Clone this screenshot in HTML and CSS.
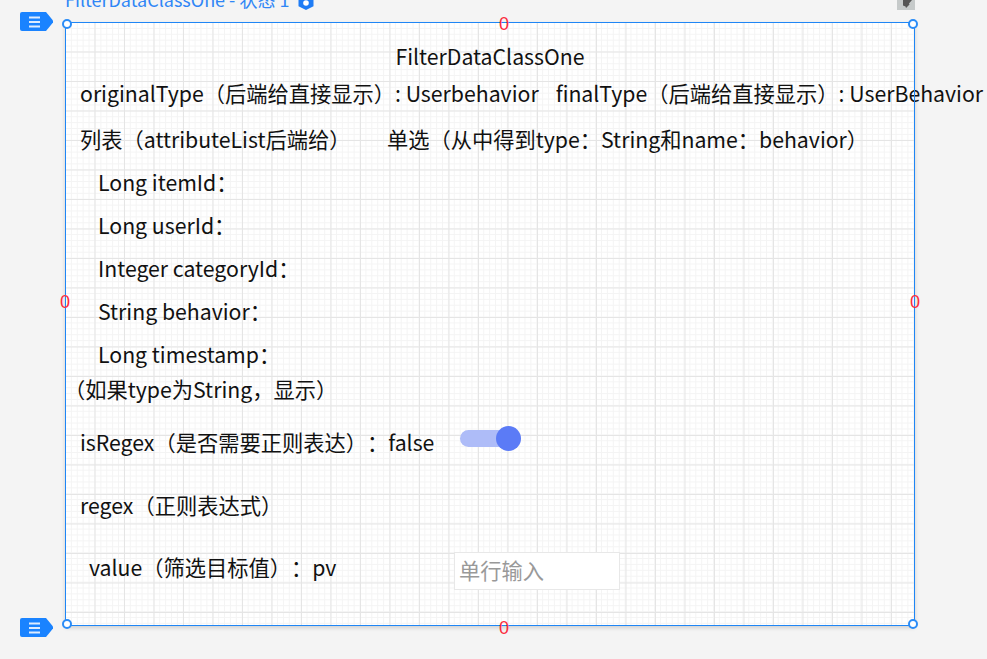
FILE: index.html
```html
<!DOCTYPE html>
<html lang="zh">
<head>
    <meta charset="UTF-8">
    <title>FilterDataClassOne</title>
    <link rel="stylesheet" href="styles.css">
</head>
<body>
<div class="stage">
    <div class="state-bar">
        <span class="state-name">FilterDataClassOne - 状态 1</span>
        <svg class="state-icon" width="16" height="16" viewBox="0 0 16 16">
            <path d="M8 0 15.500 3.800v8.400L8 16 .5 12.200V3.800z" fill="#1f7cf5"/>
            <circle cx="8" cy="9" r="2.800" fill="#fff"/>
        </svg>
        <span class="state-tool">
            <svg width="18" height="10" viewBox="0 0 18 10"><path d="M6 0h9l-3 3.500.5 1L9 8l-.5-1.500L6 5.500z" fill="#555"/></svg>
        </span>
    </div>

    <div class="tag tag-top">
        <svg width="33" height="19" viewBox="0 0 33 19">
            <path d="M2 0h24l7 8.500v2L26 19H2a2 2 0 0 1-2-2V2a2 2 0 0 1 2-2z" fill="#1a83ff"/>
            <path d="M9 5.500h11M9 10h11M9 14.500h11" stroke="#fff" stroke-width="1.800" opacity=".85"/>
        </svg>
    </div>
    <div class="tag tag-bottom">
        <svg width="33" height="19" viewBox="0 0 33 19">
            <path d="M2 0h24l7 8.500v2L26 19H2a2 2 0 0 1-2-2V2a2 2 0 0 1 2-2z" fill="#1a83ff"/>
            <path d="M9 5.500h11M9 10h11M9 14.500h11" stroke="#fff" stroke-width="1.800" opacity=".85"/>
        </svg>
    </div>

    <div class="panel">
        <div class="title">FilterDataClassOne</div>
        <div class="row types">
            <span>originalType（后端给直接显示）: Userbehavior</span>
            <span>finalType（后端给直接显示）: UserBehavior</span>
        </div>
        <div class="row list-row">
            <span class="list-label">列表（attributeList后端给）</span>
            <span>单选（从中得到type：String和name：behavior）</span>
        </div>
        <div class="row field">Long itemId：</div>
        <div class="row field">Long userId：</div>
        <div class="row field">Integer categoryId：</div>
        <div class="row field">String behavior：</div>
        <div class="row field">Long timestamp：</div>
        <div class="row note">（如果type为String，显示）</div>
        <div class="row regex-row">
            <span class="regex-label">isRegex（是否需要正则表达）：false</span>
            <span class="switch"><i class="knob"></i></span>
        </div>
        <div class="row regex-text">regex（正则表达式）</div>
        <div class="row value-row">
            <span class="value-label">value（筛选目标值）：pv</span>
            <span class="input">单行输入</span>
        </div>

        <div class="frame"></div>
        <span class="handle h-tl"></span>
        <span class="handle h-tr"></span>
        <span class="handle h-bl"></span>
        <span class="handle h-br"></span>
        <span class="zero z-top">0</span>
        <span class="zero z-left">0</span>
        <span class="zero z-right">0</span>
        <span class="zero z-bottom">0</span>
    </div>
</div>
</body>
</html>
```

FILE: styles.css
```css
* {
    box-sizing: border-box;
    margin: 0;
    padding: 0;
}

html, body {
    height: 100%;
    overflow: hidden;
}

body {
    background: #f4f4f4;
    font-family: "Noto Sans CJK SC", "Noto Sans", sans-serif;
    color: #111;
}

.stage {
    position: relative;
    height: 659px;
    padding-left: 65px;
}

.state-bar {
    display: flex;
    align-items: flex-start;
    height: 22px;
    width: 850px;
    overflow: hidden;
}

.state-name {
    color: #2f86f6;
    font-size: 18px;
    line-height: 22px;
    margin-top: -12px;
    white-space: nowrap;
}

.state-icon {
    margin: -6px 0 0 9px;
}

.state-tool {
    display: block;
    margin-left: auto;
    width: 18px;
    height: 10px;
    background: #c6caca;
}

.state-tool svg {
    display: block;
}

.tag {
    position: absolute;
    left: 20px;
    width: 33px;
    height: 19px;
}

.tag-top { top: 12px; }
.tag-bottom { top: 618px; }

.panel {
    position: relative;
    width: 850px;
    height: 604px;
    border: 1px solid transparent;
    box-shadow: 0 2px 4px rgba(0, 0, 0, .15);
    background-color: #fff;
    background-clip: padding-box;
    background-image:
        linear-gradient(#e5e5e5 1px, transparent 1px),
        linear-gradient(90deg, #e5e5e5 1px, transparent 1px),
        linear-gradient(#f4f4f4 1px, transparent 1px),
        linear-gradient(90deg, #f4f4f4 1px, transparent 1px);
    background-size: 29.5px 29.5px, 29.5px 29.5px, 5.9px 5.9px, 5.9px 5.9px;
    background-position: -1px -1px;
    font-size: 21.25px;
    line-height: 30px;
    white-space: nowrap;
    text-spacing-trim: space-all;
}

.frame {
    position: absolute;
    inset: -1px;
    border: 1px solid #1f86f5;
}

.handle {
    position: absolute;
    width: 10px;
    height: 10px;
    background: #fff;
    border: 2px solid #2a8cf7;
    border-radius: 50%;
}

.h-tl { left: -4px; top: -4px; }
.h-tr { right: -4px; top: -4px; }
.h-bl { left: -4px; bottom: -4px; }
.h-br { right: -4px; bottom: -4px; }

.zero {
    position: absolute;
    width: 10px;
    color: #fb2b3c;
    font-family: "Liberation Sans", sans-serif;
    font-size: 18px;
    line-height: 16px;
}

.z-top { left: 433px; top: -7px; }
.z-left { left: -6px; top: 271px; }
.z-right { right: -6px; top: 271px; }
.z-bottom { left: 433px; bottom: -11px; }

.title {
    text-align: center;
    margin-top: 18px;
}

.row {
    display: flex;
}

.types {
    margin-top: 7px;
    padding-left: 14px;
    gap: 17px;
}

.list-row {
    margin-top: 16px;
    padding-left: 14px;
}

.list-label {
    width: 307px;
}

.field {
    padding-left: 32px;
    margin-top: 13px;
}

.note {
    margin-top: 5px;
    margin-left: -2px;
}

.regex-row {
    padding-left: 14px;
    margin-top: 23px;
    align-items: center;
}

.regex-label {
    width: 380px;
}

.switch {
    position: relative;
    display: block;
    width: 50px;
    height: 17px;
    border-radius: 9px;
    background: #aebcf8;
    margin-top: -8px;
}

.knob {
    position: absolute;
    right: -11px;
    top: -4px;
    width: 25px;
    height: 25px;
    border-radius: 50%;
    background: #5b7bf6;
}

.regex-text {
    padding-left: 14px;
    margin-top: 33px;
}

.value-row {
    padding-left: 23px;
    margin-top: 32px;
    align-items: flex-start;
}

.value-label {
    width: 365px;
}

.input {
    display: block;
    width: 166px;
    height: 38px;
    line-height: 34px;
    padding-left: 4px;
    background: #fff;
    border: 1px solid #e8e8e8;
    color: #999;
}
```
